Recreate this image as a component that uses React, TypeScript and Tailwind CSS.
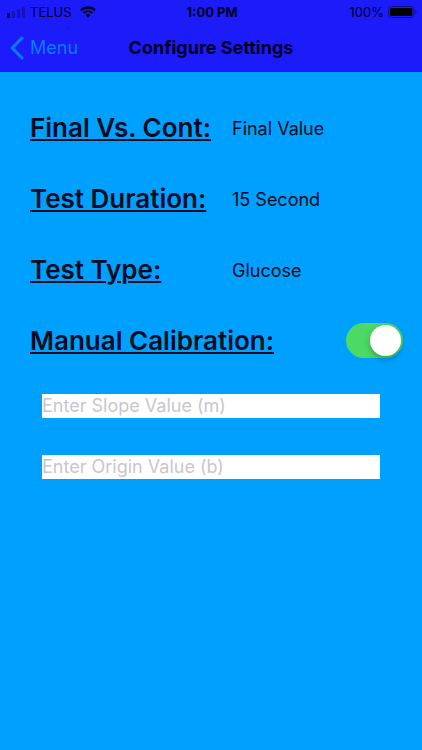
import { useState } from 'react';

const settings = [
  { name: 'Final Vs. Cont:', value: 'Final Value' },
  { name: 'Test Duration:', value: '15 Second' },
  { name: 'Test Type:', value: 'Glucose' },
];

const SignalIcon = () => (
  <svg className="w-5 h-3" viewBox="0 0 20 12" aria-hidden="true">
    <rect x="1" y="7" width="3" height="5" rx="0.8" fill="#000022" />
    <g fill="#000022" opacity="0.3">
      <rect x="6" y="5" width="3" height="7" rx="0.8" />
      <rect x="11" y="3" width="3" height="9" rx="0.8" />
      <rect x="16" y="1" width="3" height="11" rx="0.8" />
    </g>
  </svg>
);

const WifiIcon = () => (
  <svg className="w-4 h-3" viewBox="0 0 16 12" fill="none" stroke="#000022" aria-hidden="true">
    <path d="M0.9 4.4a10.2 10.2 0 0 1 14.2 0" strokeWidth="2.3" />
    <path d="M3.5 7.1a6.4 6.4 0 0 1 9 0" strokeWidth="2.1" />
    <path d="M8 11.6 5.5 9.1a3.6 3.6 0 0 1 5 0z" fill="#000022" stroke="none" />
  </svg>
);

const BatteryIcon = () => (
  <svg className="w-[30px] h-3" viewBox="0 0 30 12" aria-hidden="true">
    <rect x="0.5" y="0.5" width="25.5" height="11" rx="3" fill="none" stroke="#000022" strokeOpacity="0.5" />
    <rect x="2" y="2" width="22.5" height="8" rx="1.4" fill="#000" />
    <path d="M27.3 4v4c1.6-.5 1.6-3.5 0-4z" fill="#000022" opacity="0.5" />
  </svg>
);

const StatusBar = () => (
  <div className="grid grid-cols-3 items-center h-6 pl-1.5 pr-1 text-[13px] leading-4">
    <div className="flex items-center gap-1">
      <SignalIcon />
      <span>TELUS</span>
      <span className="pl-1">
        <WifiIcon />
      </span>
    </div>
    <span className="text-center font-bold">1:00 PM</span>
    <div className="flex items-center justify-end gap-1">
      <span>100%</span>
      <BatteryIcon />
    </div>
  </div>
);

const NavBar = () => (
  <nav className="grid grid-cols-[1fr_auto_1fr] items-center h-12 px-2.5">
    <a href="#menu" className="flex items-center gap-1 text-[#0a7aff] text-lg">
      <svg className="w-4 h-6" viewBox="0 0 16 24" fill="none" stroke="currentColor" strokeWidth="3" strokeLinecap="round" strokeLinejoin="round" aria-hidden="true">
        <path d="M12 2 2.2 12 12 22" />
      </svg>
      Menu
    </a>
    <h1 className="text-lg font-bold">Configure Settings</h1>
  </nav>
);

const labelStyle = 'text-[26px] leading-8 font-semibold underline decoration-2 underline-offset-2 whitespace-nowrap';
const inputStyle = 'w-full h-6 bg-white text-lg leading-6 text-black placeholder:text-[#c7c7cd] outline-none';

const App = () => {
  const [manual, setManual] = useState(true);
  const [slope, setSlope] = useState('');
  const [origin, setOrigin] = useState('');

  return (
    <div className="min-h-screen bg-[#00a0ff] text-[#000c22] font-['Inter','Liberation_Sans',sans-serif]">
      <header className="bg-[#1c1cfb] text-[#000022]">
        <StatusBar />
        <NavBar />
      </header>

      <main className="pt-5">
        <dl>
          {settings.map((item) => (
            <div key={item.name} className="grid grid-cols-[202px_1fr] items-center h-[71px] pl-[30px]">
              <dt className={labelStyle}>{item.name}</dt>
              <dd className="text-lg leading-6 pt-0.5">{item.value}</dd>
            </div>
          ))}
        </dl>

        <div className="flex items-center justify-between h-[71px] pl-[30px] pr-[19px]">
          <label htmlFor="manual" className={labelStyle}>
            Manual Calibration:
          </label>
          <input
            id="manual"
            type="checkbox"
            role="switch"
            checked={manual}
            onChange={(e) => setManual(e.target.checked)}
            className="appearance-none shrink-0 flex items-center w-[57px] h-[35px] px-0.5 rounded-full bg-gray-200 checked:bg-[#4cd964] checked:justify-end before:block before:size-[31px] before:rounded-full before:bg-white before:shadow-[0_3px_6px_rgba(0,0,0,0.25)]"
          />
        </div>

        {/* Calibration values are only asked for in manual mode */}
        {manual && (
          <form className="flex flex-col gap-[37px] px-[42px] pt-[18px]">
            <input
              type="text"
              aria-label="Slope value"
              placeholder="Enter Slope Value (m)"
              value={slope}
              onChange={(e) => setSlope(e.target.value)}
              className={inputStyle}
            />
            <input
              type="text"
              aria-label="Origin value"
              placeholder="Enter Origin Value (b)"
              value={origin}
              onChange={(e) => setOrigin(e.target.value)}
              className={inputStyle}
            />
          </form>
        )}
      </main>
    </div>
  );
};

export default App;
